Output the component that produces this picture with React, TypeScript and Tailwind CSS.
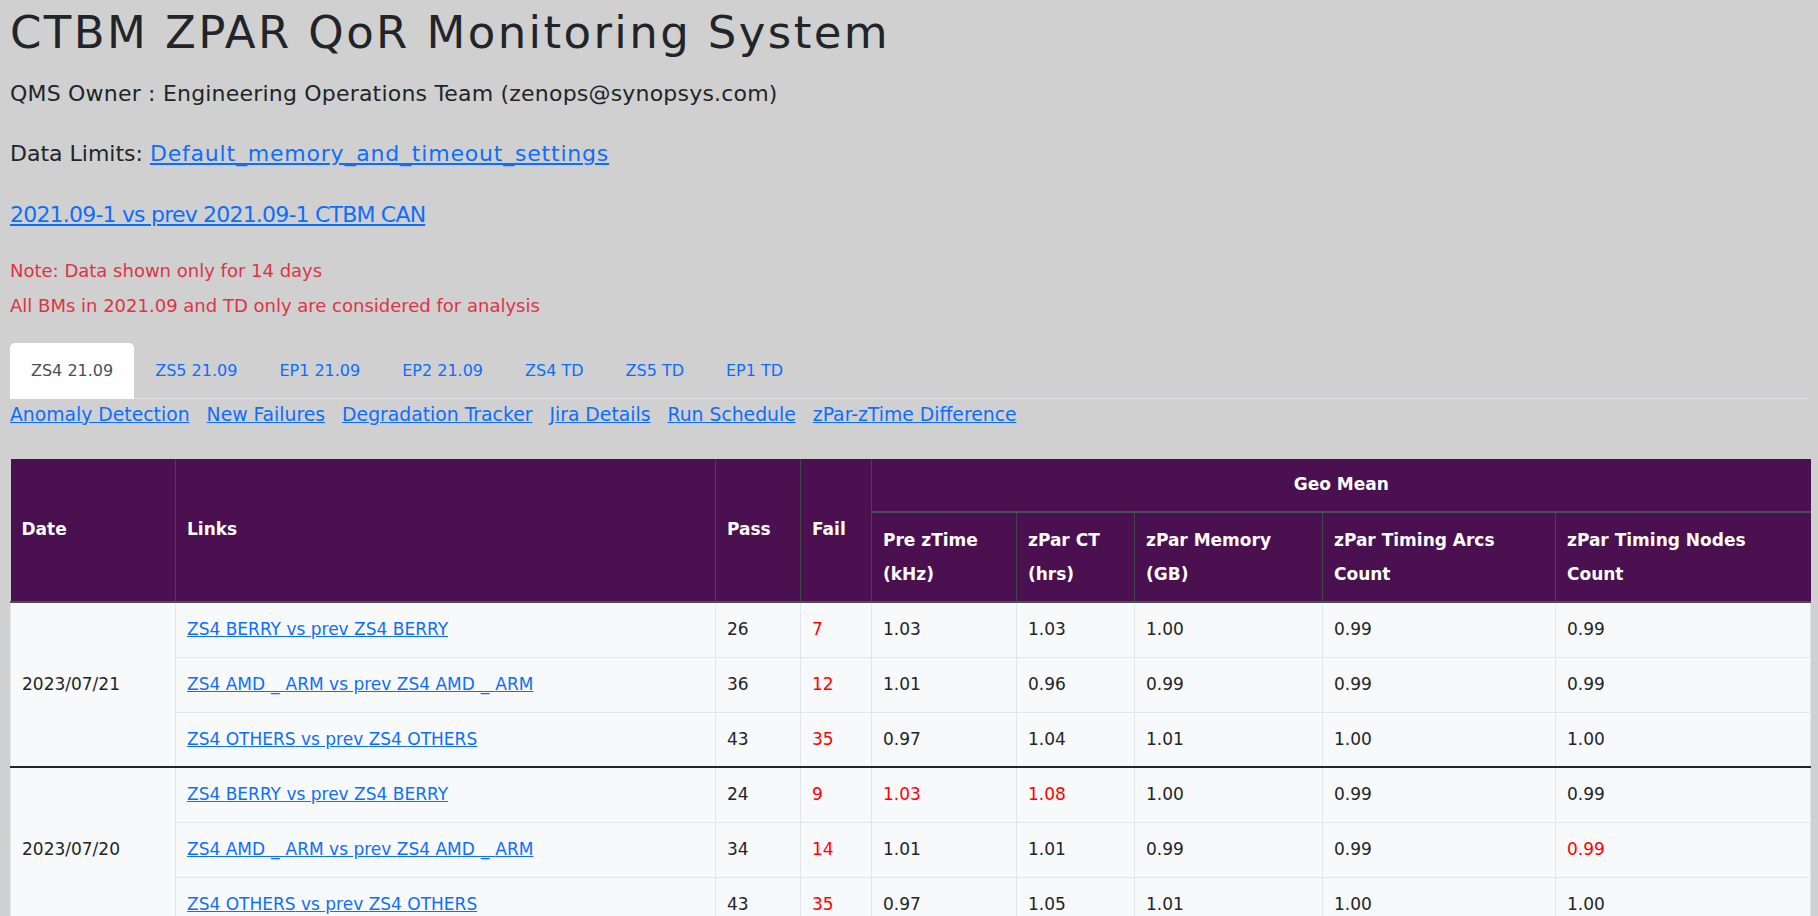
import React from "react";

type Item = {
  link: string;
  pass: number;
  fail: number;
  vals: [string, string, string, string, string];
  red?: number[];
};

type Group = { date: string; items: Item[] };

const tabs = ["ZS4 21.09", "ZS5 21.09", "EP1 21.09", "EP2 21.09", "ZS4 TD", "ZS5 TD", "EP1 TD"];
const subLinks = [
  "Anomaly Detection",
  "New Failures",
  "Degradation Tracker",
  "Jira Details",
  "Run Schedule",
  "zPar-zTime Difference",
];

const groups: Group[] = [
  {
    date: "2023/07/21",
    items: [
      { link: "BERRY", pass: 26, fail: 7, vals: ["1.03", "1.03", "1.00", "0.99", "0.99"] },
      { link: "AMD_ARM", pass: 36, fail: 12, vals: ["1.01", "0.96", "0.99", "0.99", "0.99"] },
      { link: "OTHERS", pass: 43, fail: 35, vals: ["0.97", "1.04", "1.01", "1.00", "1.00"] },
    ],
  },
  {
    date: "2023/07/20",
    items: [
      { link: "BERRY", pass: 24, fail: 9, vals: ["1.03", "1.08", "1.00", "0.99", "0.99"], red: [0, 1] },
      { link: "AMD_ARM", pass: 34, fail: 14, vals: ["1.01", "1.01", "0.99", "0.99", "0.99"], red: [4] },
      { link: "OTHERS", pass: 43, fail: 35, vals: ["0.97", "1.05", "1.01", "1.00", "1.00"] },
    ],
  },
];

function Suite({ name }: { name: string }) {
  if (name !== "AMD_ARM") return <>ZS4 {name}</>;
  return (
    <>
      ZS4 AM<span className="tracking-[6px]">D_</span>ARM
    </>
  );
}

const thMain = "border-r border-[#3e4845] border-b-2 border-b-[#495057] px-[11px] text-left align-middle";
const thSub = "border-r border-[#3e4845] border-b-2 border-b-[#495057] px-[11px] text-left align-middle leading-[34px]";

export default function App() {
  return (
    <div className="min-h-screen bg-[#d0d0d0] px-[10px] font-['DejaVu_Sans',sans-serif] text-[#212529]">
      <h1 className="h-[66px] text-[45px] leading-[66px] tracking-[2.4px] font-normal whitespace-nowrap">
        CTBM ZPAR QoR Monitoring System
      </h1>
      <p className="mt-[12px] h-[32px] text-[22px] leading-[32px] tracking-[0.2px]">
        QMS Owner : Engineering Operations Team (zenops@synopsys.com)
      </p>
      <p className="mt-[28px] h-[32px] text-[22px] leading-[32px]">
        Data Limits:{" "}
        <a href="#" className="text-[#0d6efd] underline tracking-[0.8px]">
          Default_memory_and_timeout_settings
        </a>
      </p>
      <p className="mt-[29px] h-[32px] text-[22px] leading-[32px]">
        <a href="#" className="text-[#0d6efd] underline tracking-[-0.8px]">
          2021.09-1 vs prev 2021.09-1 CTBM CAN
        </a>
      </p>
      <p className="mt-[25px] h-[30px] text-[18px] leading-[30px] text-[#dc3545]">Note: Data shown only for 14 days</p>
      <p className="mt-[5px] h-[30px] text-[18px] leading-[30px] text-[#dc3545]">
        All BMs in 2021.09 and TD only are considered for analysis
      </p>

      <div className="mt-[22px] flex border-b border-[#dee2e6]">
        {tabs.map((t, i) => (
          <a
            key={t}
            href="#"
            className={
              i === 0
                ? "-mb-px flex h-[56px] items-center rounded-t-[5px] bg-white px-[21px] text-[16px] text-[#495057]"
                : "-mb-px flex h-[56px] items-center px-[21px] text-[16px] text-[#0d6efd]"
            }
          >
            {t}
          </a>
        ))}
      </div>

      <div className="flex h-[32px] items-center gap-[17px] text-[18.8px]">
        {subLinks.map((l) => (
          <a key={l} href="#" className="text-[#0d6efd] underline">
            {l}
          </a>
        ))}
      </div>

      <table className="mt-[28px] w-[1800px] table-fixed border-collapse text-[17px]">
        <colgroup>
          <col className="w-[165px]" />
          <col className="w-[540px]" />
          <col className="w-[85px]" />
          <col className="w-[71px]" />
          <col className="w-[145px]" />
          <col className="w-[118px]" />
          <col className="w-[188px]" />
          <col className="w-[233px]" />
          <col className="w-[255px]" />
        </colgroup>
        <thead className="bg-[#4a1050] font-bold text-white">
          <tr className="h-[53px]">
            <th rowSpan={2} className={thMain}>Date</th>
            <th rowSpan={2} className={thMain}>Links</th>
            <th rowSpan={2} className={thMain}>Pass</th>
            <th rowSpan={2} className={thMain}>Fail</th>
            <th colSpan={5} className="border-b-2 border-[#495057] text-center align-middle">
              Geo Mean
            </th>
          </tr>
          <tr className="h-[90px]">
            <th className={thSub}>
              Pre zTime
              <br />
              (kHz)
            </th>
            <th className={thSub}>
              zPar CT
              <br />
              (hrs)
            </th>
            <th className={thSub}>
              zPar Memory
              <br />
              (GB)
            </th>
            <th className={thSub}>
              zPar Timing Arcs
              <br />
              Count
            </th>
            <th className="border-b-2 border-b-[#495057] px-[11px] text-left align-middle leading-[34px]">
              zPar Timing Nodes
              <br />
              Count
            </th>
          </tr>
        </thead>
        <tbody className="bg-[#f8f9fa]">
          {groups.map((g, gi) =>
            g.items.map((it, i) => {
              const top = gi > 0 && i === 0 ? "border-t-2 border-t-[#212529]" : "";
              const cell = `h-[55px] border border-[#e3e6e9] px-[11px] align-middle ${top}`;
              return (
                <tr key={g.date + i}>
                  {i === 0 && (
                    <td rowSpan={g.items.length} className={`border border-[#e3e6e9] px-[11px] align-middle ${top}`}>
                      {g.date}
                    </td>
                  )}
                  <td className={cell}>
                    <a href="#" className="text-[#0d6efd] underline">
                      <Suite name={it.link} /> vs prev <Suite name={it.link} />
                    </a>
                  </td>
                  <td className={cell}>{it.pass}</td>
                  <td className={`${cell} text-[#ff0000]`}>{it.fail}</td>
                  {it.vals.map((v, vi) => (
                    <td key={vi} className={`${cell} ${it.red?.includes(vi) ? "text-[#ff0000]" : ""}`}>
                      {v}
                    </td>
                  ))}
                </tr>
              );
            })
          )}
        </tbody>
      </table>
    </div>
  );
}
